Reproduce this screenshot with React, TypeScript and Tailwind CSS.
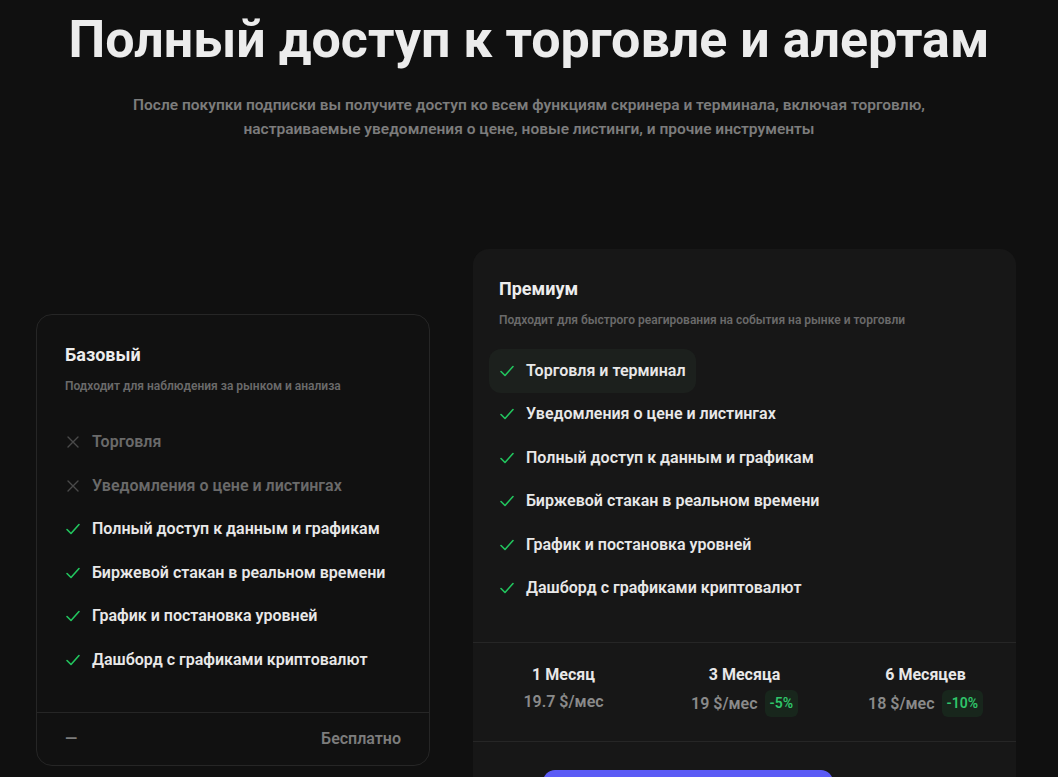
import React from "react";

const basicFeatures: [string, boolean][] = [
  ["Торговля", false],
  ["Уведомления о цене и листингах", false],
  ["Полный доступ к данным и графикам", true],
  ["Биржевой стакан в реальном времени", true],
  ["График и постановка уровней", true],
  ["Дашборд с графиками криптовалют", true],
];

const premiumFeatures = [
  "Торговля и терминал",
  "Уведомления о цене и листингах",
  "Полный доступ к данным и графикам",
  "Биржевой стакан в реальном времени",
  "График и постановка уровней",
  "Дашборд с графиками криптовалют",
];

const Check = () => (
  <svg width="16" height="16" viewBox="0 0 16 16" fill="none" className="shrink-0">
    <path d="M2 8.5l4 4 8-9" stroke="#22c55e" strokeWidth="1.6" strokeLinecap="round" strokeLinejoin="round" />
  </svg>
);

const Cross = () => (
  <svg width="16" height="16" viewBox="0 0 16 16" fill="none" className="shrink-0">
    <path d="M3 3l10 10M13 3L3 13" stroke="#4a4a4a" strokeWidth="1.4" strokeLinecap="round" />
  </svg>
);

const plans = [
  { name: "1 Месяц", price: "19.7 $/мес", off: "" },
  { name: "3 Месяца", price: "19 $/мес", off: "-5%" },
  { name: "6 Месяцев", price: "18 $/мес", off: "-10%" },
];

export default function App() {
  return (
    <div className="h-[777px] overflow-hidden bg-[#101010] text-white" style={{ fontFamily: "Roboto, 'Noto Sans', sans-serif" }}>
      <h1 className="pt-[10px] text-center text-[52px] font-bold leading-[60px] text-[#ececec]">
        Полный доступ к торговле и алертам
      </h1>
      <p className="mx-auto mt-[23px] w-[800px] text-center text-[15.5px] font-semibold leading-6 text-[#7c7c7c]">
        После покупки подписки вы получите доступ ко всем функциям скринера и терминала, включая торговлю, настраиваемые уведомления о цене, новые листинги, и прочие инструменты
      </p>

      <div className="mt-[108px] flex items-start gap-[43px] px-[36px]">
        <div className="mt-[65px] w-[394px] rounded-2xl border border-[#262626] bg-[#111111]">
          <div className="px-[28px] pt-[28px]">
            <div className="text-[18px] font-bold leading-6 text-[#ededed]">Базовый</div>
            <div className="mt-[10px] text-[12px] font-semibold text-[#6a6a6a]">Подходит для наблюдения за рынком и анализа</div>
            <div className="mt-[36px] flex flex-col gap-[21.6px] pb-[41px]">
              {basicFeatures.map(([t, ok]) => (
                <div key={t} className="flex items-center gap-[11px] leading-[22px]">
                  {ok ? <Check /> : <Cross />}
                  <span className={`text-[16px] font-semibold ${ok ? "text-[#e8e8e8]" : "text-[#6a6a6a]"}`}>{t}</span>
                </div>
              ))}
            </div>
          </div>
          <div className="flex items-center justify-between border-t border-[#262626] px-[28px] py-[14px] text-[16px] font-semibold text-[#7c7c7c]">
            <span>—</span>
            <span>Бесплатно</span>
          </div>
        </div>

        <div className="w-[543px] rounded-2xl bg-[#171717]">
          <div className="px-[26px] pt-[28px]">
            <div className="text-[18px] font-bold leading-6 text-[#ededed]">Премиум</div>
            <div className="mt-[10px] text-[12px] font-semibold text-[#6a6a6a]">Подходит для быстрого реагирования на события на рынке и торговли</div>
            <div className="-ml-[10px] mt-[20px] flex flex-col items-start pb-[32px]">
              {premiumFeatures.map((t, i) => (
                <div key={t} className={`flex items-center gap-[11px] rounded-xl px-[10px] py-[10.75px] leading-[22px] ${i === 0 ? "bg-[#1c201d]" : ""}`}>
                  <Check />
                  <span className="text-[16px] font-semibold text-[#e8e8e8]">{t}</span>
                </div>
              ))}
            </div>
          </div>
          <div className="grid grid-cols-3 border-t border-b border-[#262626] pt-[20px] pb-[24px]">
            {plans.map((p) => (
              <div key={p.name} className="flex flex-col items-center">
                <div className="text-[16px] font-bold text-[#e8e8e8]">{p.name}</div>
                <div className="mt-[3px] flex items-center gap-[7px]">
                  <span className="text-[16px] font-semibold text-[#8a8a8a]">{p.price}</span>
                  {p.off && <span className="rounded-md bg-[#18261c] px-[5px] py-[3px] text-[14px] font-semibold text-[#2fc56a]">{p.off}</span>}
                </div>
              </div>
            ))}
          </div>
          <div className="px-[70px] pt-[28px] pb-[28px]">
            <div className="h-[44px] w-[290px] rounded-xl bg-[#5b5bf5]" />
          </div>
        </div>
      </div>
    </div>
  );
}
